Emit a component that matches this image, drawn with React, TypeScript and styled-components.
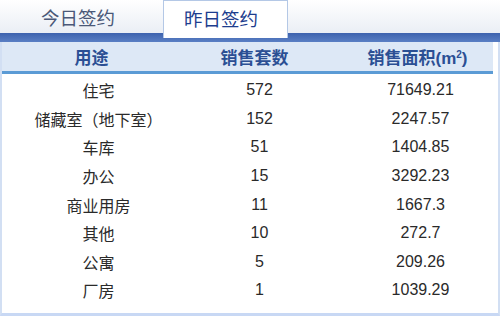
import styled, { createGlobalStyle } from 'styled-components';

const GlobalStyle = createGlobalStyle`
  html, body {
    margin: 0;
    padding: 0;
    background: #ffffff;
  }
  body {
    font-family: "Liberation Sans", "Noto Sans CJK SC", sans-serif;
  }
`;

interface IRow {
  use: string;
  count: number;
  area: string;
}

const rows: IRow[] = [
  { use: '住宅', count: 572, area: '71649.21' },
  { use: '储藏室（地下室）', count: 152, area: '2247.57' },
  { use: '车库', count: 51, area: '1404.85' },
  { use: '办公', count: 15, area: '3292.23' },
  { use: '商业用房', count: 11, area: '1667.3' },
  { use: '其他', count: 10, area: '272.7' },
  { use: '公寓', count: 5, area: '209.26' },
  { use: '厂房', count: 1, area: '1039.29' },
];

const App = () => {
  return (
    <>
      <GlobalStyle />
      <StyledPage>
        <StyledTabBar>
          <StyledTab $active={false}>今日签约</StyledTab>
          <StyledTab $active={true}>昨日签约</StyledTab>
        </StyledTabBar>
        <StyledBlueBar />

        <StyledTable>
          <StyledHeader>
            <StyledHeaderCell>用途</StyledHeaderCell>
            <StyledHeaderCell>销售套数</StyledHeaderCell>
            <StyledHeaderCell>
              销售面积(m<sup>2</sup>)
            </StyledHeaderCell>
          </StyledHeader>

          <StyledBody>
            {rows.map((row: IRow, index: number) => (
              <StyledRow key={index}>
                <StyledCell>{row.use}</StyledCell>
                <StyledCell>{row.count}</StyledCell>
                <StyledCell>{row.area}</StyledCell>
              </StyledRow>
            ))}
          </StyledBody>
        </StyledTable>
      </StyledPage>
    </>
  );
};

export default App;

/** STYLED COMPONENTS  **/

const StyledPage = styled.div`
  width: 500px;
  height: 316px;
  overflow: hidden;
  display: flex;
  flex-direction: column;
`;

const StyledTabBar = styled.div`
  display: flex;
  align-items: flex-start;
  gap: 7px;
  height: 33px;
  background: linear-gradient(#ffffff, #eaeef5);
`;

const StyledTab = styled.div<{ $active: boolean }>`
  position: relative;
  z-index: 1;
  box-sizing: border-box;
  display: flex;
  align-items: center;
  justify-content: center;

  width: ${(p) => (p.$active ? '125px' : '156px')};
  height: ${(p) => (p.$active ? '38px' : '33px')};
  padding-right: ${(p) => (p.$active ? '9px' : '0')};
  padding-bottom: ${(p) => (p.$active ? '4px' : '0')};

  background: ${(p) => (p.$active ? '#ffffff' : 'transparent')};
  border: ${(p) => (p.$active ? '1px solid #b4c8e6' : 'none')};
  border-bottom: none;

  font-size: 18.5px;
  color: ${(p) => (p.$active ? '#1d3d8e' : '#4a5878')};
`;

const StyledBlueBar = styled.div`
  height: 9px;
  background: linear-gradient(#3d62ae, #5a7fc4);
`;

const StyledTable = styled.div`
  flex: 1;
  display: flex;
  flex-direction: column;
  box-sizing: border-box;
  padding: 0 5px 8px 5px;
  border-left: 2px solid #d2dff3;
  border-right: 2px solid #d2dff3;
  border-bottom: 3px solid #c8d8f4;
`;

const StyledHeader = styled.div`
  display: grid;
  grid-template-columns: repeat(3, 163px);
  align-items: center;
  height: 29px;
  margin-left: -5px;
  padding-left: 8px;
  background: #dde8f6;
  border-bottom: 3px solid #5b9bd5;
`;

const StyledHeaderCell = styled.div`
  text-align: center;
  font-size: 17px;
  font-weight: bold;
  color: #2b4f94;

  sup {
    font-size: 10px;
    vertical-align: 6px;
  }
`;

const StyledBody = styled.div`
  display: flex;
  flex-direction: column;
  padding-top: 2px;
  padding-left: 11px;
`;

const StyledRow = styled.div`
  display: grid;
  grid-template-columns: repeat(3, 161px);
  align-items: center;
  height: 28.6px;
`;

const StyledCell = styled.div`
  text-align: center;
  font-size: 16px;
  color: #2a2a2a;
  white-space: nowrap;
`;
